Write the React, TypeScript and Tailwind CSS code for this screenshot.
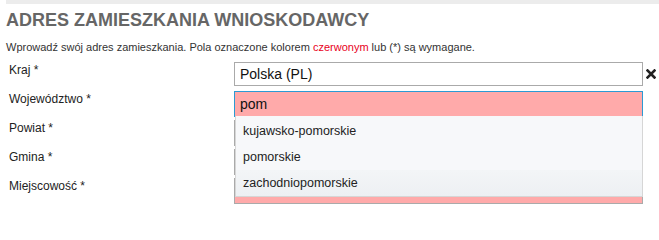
import React from "react";

const rows = [
  { label: "Kraj *", value: "Polska (PL)", required: false, focused: false, clear: true },
  { label: "Województwo *", value: "pom", required: true, focused: true, clear: false },
  { label: "Powiat *", value: "", required: true, focused: false, clear: false },
  { label: "Gmina *", value: "", required: true, focused: false, clear: false },
  { label: "Miejscowość *", value: "", required: true, focused: false, clear: false },
];

const suggestions = ["kujawsko-pomorskie", "pomorskie", "zachodniopomorskie"];

function ClearIcon() {
  return (
    <svg width="10" height="10" viewBox="0 0 10 10" className="block">
      <path d="M1.5 1.5 L8.5 8.5 M8.5 1.5 L1.5 8.5" stroke="#222" strokeWidth="2.6" strokeLinecap="square" />
    </svg>
  );
}

export default function App() {
  return (
    <div
      className="w-[659px] h-[209px] overflow-hidden bg-white text-[#333]"
      style={{ fontFamily: '"Liberation Sans", Arial, sans-serif' }}
    >
      <div className="ml-[6px] h-[4px] bg-[#ececec]" />
      <h2 className="ml-[6px] mt-[5px] text-[18px] leading-[22px] font-bold text-[#666]">
        ADRES ZAMIESZKANIA WNIOSKODAWCY
      </h2>
      <p className="ml-[6px] mt-[10px] text-[11px] leading-[13px] text-[#333]">
        Wprowadź swój adres zamieszkania. Pola oznaczone kolorem{" "}
        <span className="text-[#e8001c]">czerwonym</span> lub (*) są wymagane.
      </p>

      <div className="relative mt-[6px]">
        {rows.map((r) => (
          <div key={r.label} className="flex h-[29px]">
            <div className="w-[234px] pl-[9px] pt-[2px] text-[12px] leading-[16px] text-[#222]">
              {r.label}
            </div>
            <div className="flex items-start gap-[3px] pt-[2px]">
              <div
                className={
                  "w-[409px] border px-[5px] text-[14px] text-[#111] " +
                  (r.focused
                    ? "h-[26px] leading-[24px] border-[#2c9ad3] bg-[#ffaaaa]"
                    : r.required
                    ? "h-[26px] leading-[24px] border-[#aaa] bg-[#ffaaaa]"
                    : "h-[24px] leading-[22px] border-[#aaa] bg-white")
                }
              >
                {r.value}
              </div>
              {r.clear && (
                <div className="pt-[7px]">
                  <ClearIcon />
                </div>
              )}
            </div>
          </div>
        ))}

        <ul className="absolute left-[235px] top-[56px] w-[408px] h-[81px] border-x border-b border-[#d6d6d6] bg-[#f7f8fa] pt-[2px] text-[12.5px] text-[#222]">
          {suggestions.map((s, i) => (
            <li
              key={s}
              className={
                "h-[26px] leading-[26px] pl-[7px] " +
                (i === suggestions.length - 1 ? "bg-gradient-to-b from-[#f3f5f7] to-[#edf0f3]" : "")
              }
            >
              {s}
            </li>
          ))}
        </ul>
      </div>
    </div>
  );
}
